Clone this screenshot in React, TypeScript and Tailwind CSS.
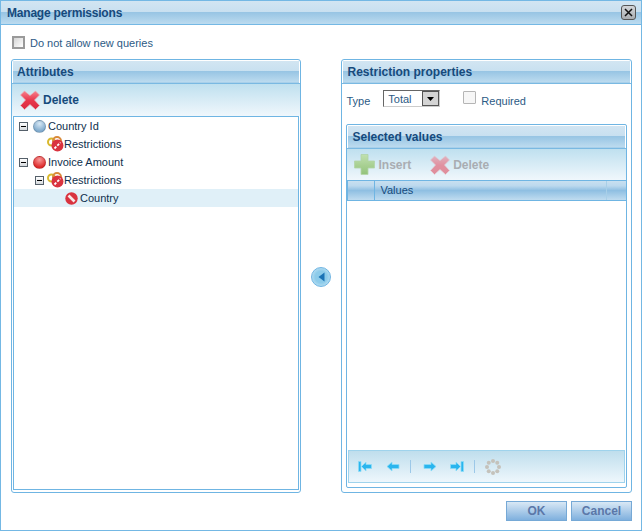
import { ReactNode } from 'react'

const barBg = 'bg-[linear-gradient(#d2e5f2_0%,#c8e0f0_48%,#98c5e4_50%,#bcdbef_100%)]'
const toolbarBg = 'bg-[linear-gradient(#bfe0ef_0%,#f0f7fc_100%)]'

function DeleteIcon({ muted = false }: { muted?: boolean }) {
  const id = muted ? 'del-muted' : 'del'
  return (
    <svg width="20" height="20" viewBox="0 0 20 20" className={muted ? 'opacity-50' : ''}>
      <defs>
        <linearGradient id={id} x1="0" y1="0" x2="0" y2="1">
          <stop offset="0" stopColor="#f7808e" />
          <stop offset="0.5" stopColor="#e8384d" />
          <stop offset="1" stopColor="#d92a40" />
        </linearGradient>
      </defs>
      <path d="M4.500 1 10 5.500 15.500 1 19.500 5 14.500 10 19.500 15.500 15.500 19.500 10 14.500 4.500 19.500 .5 15.500 5.500 10 .5 5Z" fill={`url(#${id})`} stroke="#e6b4ba" strokeWidth="0.7" />
    </svg>
  )
}

function PlusIcon() {
  return (
    <svg width="21" height="21" viewBox="0 0 21 21" className="opacity-80">
      <defs>
        <linearGradient id="plus" x1="0" y1="0" x2="0" y2="1">
          <stop offset="0" stopColor="#bfe09f" />
          <stop offset="1" stopColor="#7fb75c" />
        </linearGradient>
      </defs>
      <path d="M7 .5h7V7h6.500v7H14v6.500H7V14H.5V7H7Z" fill="url(#plus)" stroke="#a9cf95" strokeWidth="0.8" />
    </svg>
  )
}

function Ball({ color, light }: { color: string; light: string }) {
  return (
    <span
      className="h-[13px] w-[13px] shrink-0 rounded-full border border-black/15"
      style={{ background: `radial-gradient(circle at 50% 25%, ${light}, ${color} 75%)` }}
    />
  )
}

function NoEntry() {
  return (
    <svg width="13" height="13" viewBox="0 0 13 13">
      <circle cx="6.500" cy="6.500" r="6.200" fill="#d9333f" />
      <path d="M3.500 3.500 9.500 9.500" stroke="#f8e8e8" strokeWidth="2.600" />
    </svg>
  )
}

function RestrictionIcon() {
  return (
    <svg width="17" height="16" viewBox="0 0 17 16" className="-ml-[2px] shrink-0">
      <circle cx="4.500" cy="6" r="3.500" fill="none" stroke="#d9b92e" strokeWidth="2" />
      <circle cx="10" cy="5" r="4" fill="none" stroke="#d98a3a" strokeWidth="2" />
      <circle cx="10.500" cy="9.500" r="6" fill="#d9333f" />
      <path d="M7.500 12.500 13.500 6.500" stroke="#fff" strokeWidth="1.800" strokeDasharray="2.500 1.500" />
    </svg>
  )
}

function Expander() {
  return (
    <span className="flex h-[9px] w-[9px] shrink-0 items-center justify-center border border-[#55606a] bg-[linear-gradient(#ffffff,#d5d9dd)]">
      <span className="h-px w-[5px] bg-black" />
    </span>
  )
}

function TreeRow({ indent, expander = false, icon, label, selected = false }: {
  indent: string
  expander?: boolean
  icon: ReactNode
  label: string
  selected?: boolean
}) {
  return (
    <div className={`flex h-[18px] items-center ${indent} ${selected ? 'bg-[#e0f0f8]' : ''}`}>
      <span className="flex w-[14px] shrink-0 items-center pl-[1px]">{expander && <Expander />}</span>
      <span className="flex w-[16px] shrink-0 pl-[1px]">{icon}</span>
      <span className="text-[#0e2f4d]">{label}</span>
    </div>
  )
}

function PanelHeader({ children }: { children: ReactNode }) {
  return (
    <div className="border-b border-[#7ab9e2] px-[1px] pt-[1px]">
      <div className={`h-[22px] ${barBg} border-b border-[#a9d0ea] px-[4px] text-[12px] font-bold leading-[22px] text-[#164a7c]`}>
        {children}
      </div>
    </div>
  )
}

function PagerArrow({ d }: { d: string }) {
  return (
    <svg width="14" height="11" viewBox="0 0 14 11" className="shrink-0">
      <path d={d} fill="#2ab5ee" stroke="#8adcf7" strokeWidth="0.8" />
    </svg>
  )
}

const first = 'M.5 .5h2.500v10H.5ZM3.500 5.500 8 1v2.500h5.500v4H8V10Z'
const prev = 'M1 5.500 6 1v2.500h7v4H6V10Z'
const next = 'M13 5.500 8 1v2.500H1v4h7V10Z'
const last = 'M13.500 .5H11v10h2.500ZM10.500 5.500 6 1v2.500H.5v4H6V10Z'

function Spinner() {
  const dots = [0, 45, 90, 135, 180, 225, 270, 315]
  return (
    <svg width="16" height="16" viewBox="0 0 16 16" className="shrink-0">
      {dots.map((a) => (
        <circle
          key={a}
          cx={8 + 6 * Math.cos((a * Math.PI) / 180)}
          cy={8 + 6 * Math.sin((a * Math.PI) / 180)}
          r="2"
          fill="#c4c2bb"
        />
      ))}
    </svg>
  )
}

function DialogButton({ label }: { label: string }) {
  return (
    <button className="h-[20px] w-[61px] border border-[#76a9d6] bg-[linear-gradient(#d9e8f5,#7fb0de)] text-[12px] font-bold leading-[18px] text-[#5b77a8]">
      {label}
    </button>
  )
}

export default function App() {
  return (
    <div className="flex h-[531px] w-[642px] flex-col overflow-hidden border-[1.500px] border-[#74b8e4] bg-white font-['Liberation_Sans',sans-serif] text-[11px] text-[#164a7c]">
      <div className={`flex h-[24px] items-center justify-between border-b border-[#74b8e4] ${barBg} pl-[6px] pr-[5px]`}>
        <span className="text-[12px] font-bold tracking-[-0.2px] text-[#164a7c]">Manage permissions</span>
        <span className="flex h-[15px] w-[15px] items-center justify-center rounded-[3px] border border-[#555] bg-[linear-gradient(#d3d6d9,#a9adb1)]">
          <svg width="9" height="9" viewBox="0 0 9 9"><path d="M1 1 8 8M8 1 1 8" stroke="#111" strokeWidth="1.500" /></svg>
        </span>
      </div>

      <div className="flex h-[34px] items-center pl-[11px]">
        <span className="h-[13px] w-[13px] border-2 border-[#9a9a9a] bg-[linear-gradient(135deg,#d5d5d5,#fff)]" />
        <span className="ml-[5px] mt-[3px] text-[#2c5a85]">Do not allow new queries</span>
      </div>

      <div className="flex flex-1 pl-[10px] pr-[9px]">
        <section className="flex h-[434px] w-[290px] flex-col rounded-[3px] border border-[#6fb5e3]">
          <PanelHeader>Attributes</PanelHeader>
          <div className={`flex h-[32px] items-center gap-[3px] pl-[8px] ${toolbarBg} text-[12px] font-bold text-[#164a7c]`}>
            <DeleteIcon />
            Delete
          </div>
          <div className="mx-[1px] mb-[2px] flex-1 border border-[#6fb5e3]">
            <TreeRow indent="pl-[4px]" expander icon={<Ball color="#7ea9cc" light="#d7e8f5" />} label="Country Id" />
            <TreeRow indent="pl-[20px]" icon={<RestrictionIcon />} label="Restrictions" />
            <TreeRow indent="pl-[4px]" expander icon={<Ball color="#dd2a2a" light="#f99a9a" />} label="Invoice Amount" />
            <TreeRow indent="pl-[20px]" expander icon={<RestrictionIcon />} label="Restrictions" />
            <TreeRow indent="pl-[36px]" selected icon={<NoEntry />} label="Country" />
          </div>
        </section>

        <div className="flex w-[41px] items-center justify-center">
          <button className="flex h-[20px] w-[20px] items-center justify-center rounded-full border border-[#6fb5e3] bg-[radial-gradient(circle,#8ccbea_45%,#d6ecf8_100%)]">
            <svg width="7" height="10" viewBox="0 0 7 10"><path d="M6.500 0.500V9.500L0.500 5Z" fill="#1a72b5" /></svg>
          </button>
        </div>

        <section className="flex h-[434px] w-[291px] flex-col rounded-[3px] border border-[#6fb5e3]">
          <PanelHeader>Restriction properties</PanelHeader>
          <div className="flex h-[40px] items-start pl-[4px]">
            <span className="mt-[9px] text-[#2c5a85]">Type</span>
            <div className="ml-[13px] mt-[6px] flex h-[17px] w-[57px] border border-[#666] border-b-[#ccc] border-r-[#ccc] bg-white">
              <span className="flex-1 pl-[4px] leading-[16px] text-[#2c5a85]">Total</span>
              <span className="flex h-[15px] w-[17px] items-center justify-center border border-[#555] bg-[#d4d4d4]">
                <svg width="7" height="4" viewBox="0 0 7 4"><path d="M0 0h7L3.500 4Z" fill="#000" /></svg>
              </span>
            </div>
            <span className="ml-[23px] mt-[7px] h-[13px] w-[13px] rounded-[1px] border border-[#b5b5b5] bg-[#f6f6f6]" />
            <span className="ml-[5px] mt-[9px] text-[#2c5a85]">Required</span>
          </div>

          <div className="mx-[4px] flex h-[364px] flex-col rounded-[2px] border border-[#6fb5e3]">
            <PanelHeader>Selected values</PanelHeader>
            <div className={`flex h-[31px] items-center pl-[7px] ${toolbarBg} text-[12px] font-bold text-[#a9adb2]`}>
              <PlusIcon />
              <span className="ml-[3px]">Insert</span>
              <span className="ml-[19px]"><DeleteIcon muted /></span>
              <span className="ml-[3px]">Delete</span>
            </div>
            <div className="flex h-[21px] border-y border-[#6fb5e3] bg-[linear-gradient(#c8e0f0_0%,#bcd9ee_25%,#8fbfe2_50%,#c0dcf0_100%)] text-[#164a7c]">
              <span className="w-[28px] border-r border-l border-[#6fb5e3]" />
              <span className="flex-1 pl-[5px] leading-[19px]">Values</span>
              <span className="w-[20px] border-l border-[#a8cfe8]" />
            </div>
            <div className="flex-1" />
            <div className="mx-[1px] mb-[4px] flex h-[33px] items-center border border-[#9fd3ec] bg-[linear-gradient(#bfdeed,#eef7fc)] pl-[9px]">
              <PagerArrow d={first} />
              <span className="ml-[14px]"><PagerArrow d={prev} /></span>
              <span className="ml-[10px] h-[13px] w-px bg-[#9cc8e8]" />
              <span className="ml-[12px]"><PagerArrow d={next} /></span>
              <span className="ml-[13px]"><PagerArrow d={last} /></span>
              <span className="ml-[10px] h-[13px] w-px bg-[#9cc8e8]" />
              <span className="ml-[10px]"><Spinner /></span>
            </div>
          </div>
        </section>
      </div>

      <div className="flex h-[35px] items-start justify-end gap-[4px] pr-[9px] pt-[6px]">
        <DialogButton label="OK" />
        <DialogButton label="Cancel" />
      </div>
    </div>
  )
}
